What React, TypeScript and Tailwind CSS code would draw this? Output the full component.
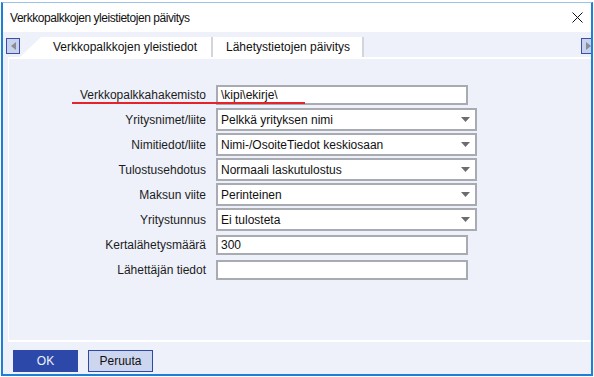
import React from "react";

function Caret() {
  return (
    <svg width="9" height="5" viewBox="0 0 9 5" className="block">
      <polygon points="0,0 9,0 4.5,5" fill="#6b6b70" />
    </svg>
  );
}

function TextField({ value }: { value: string }) {
  return (
    <div className="flex h-[20px] w-[252px] items-center border-2 border-[#a9abb3] bg-white pl-[3px] text-[12px] leading-none text-[#111]">
      {value}
    </div>
  );
}

function SelectField({ value }: { value: string }) {
  return (
    <div className="flex h-[23px] w-[261px] items-center justify-between border-2 border-[#a9abb3] bg-white pl-[3px] pr-[5px] text-[12px] leading-none text-[#111]">
      <span>{value}</span>
      <Caret />
    </div>
  );
}

function Row({ label, children, mark }: { label: string; children: React.ReactNode; mark?: boolean }) {
  return (
    <div className="relative flex h-[25px] items-center">
      <div className="w-[197px] text-right text-[12px] leading-none text-[#1c1c1c]">{label}</div>
      <div className="ml-[10px]">{children}</div>
      {mark && <div className="absolute left-[63px] top-[20px] h-[2px] w-[233px] bg-[#e3242b]" />}
    </div>
  );
}

export default function App() {
  return (
    <div className="h-[377px] w-[594px] overflow-hidden bg-white pt-[2px] font-['Liberation_Sans',Arial,sans-serif]">
      <div className="ml-[1px] flex h-[374px] w-[592px] flex-col border-x-2 border-b-2 border-t border-[#1b80d6] border-t-[#9cc3e8] bg-[#eef1fa]">
        {/* title bar */}
        <div className="flex h-[29px] shrink-0 items-center justify-between bg-white pl-[7px] pr-[8px]">
          <span className="text-[12px] tracking-[-0.45px] text-[#111]">Verkkopalkkojen yleistietojen päivitys</span>
          <svg width="11" height="11" viewBox="0 0 11 11" className="block">
            <path d="M0.5 0.5 L10.5 10.5 M10.5 0.5 L0.5 10.5" stroke="#111" strokeWidth="1" />
          </svg>
        </div>
        {/* tab strip */}
        <div className="flex h-[25px] shrink-0 items-start justify-between overflow-hidden">
          <div className="flex items-start">
            <div className="ml-[3px] mt-[6px] flex h-[16px] w-[14px] items-center justify-center border border-[#3a50a8] bg-[#c9d2ec]">
              <svg width="5" height="8" viewBox="0 0 5 8" className="block">
                <polygon points="5,0 5,8 0,4" fill="#8a8c98" />
              </svg>
            </div>
            <div className="mt-[5px] flex h-[20px] w-[193px] items-center border-r-2 border-[#d3d5dc] bg-white pl-[33px] text-[12px] leading-none text-[#111] [clip-path:polygon(21px_0,100%_0,100%_100%,0_100%)]">
              Verkkopalkkojen yleistiedot
            </div>
            <div className="mt-[5px] flex h-[20px] w-[151px] items-center border-r-2 border-[#d3d5dc] bg-white pl-[13px] text-[12px] leading-none text-[#111]">
              Lähetystietojen päivitys
            </div>
          </div>
          <div className="mr-[-4px] mt-[6px] flex h-[16px] w-[14px] items-center justify-center border border-[#3a50a8] bg-[#c9d2ec]">
            <svg width="5" height="8" viewBox="0 0 5 8" className="block">
              <polygon points="0,0 0,8 5,4" fill="#8a8c98" />
            </svg>
          </div>
        </div>
        {/* content panel */}
        <div className="ml-[5px] h-[285px] shrink-0 border-y-2 border-l border-white bg-[#eef1fa] pt-[23px]">
          <Row label="Verkkopalkkahakemisto" mark>
            <TextField value="\kipi\ekirje\" />
          </Row>
          <Row label="Yritysnimet/liite">
            <SelectField value="Pelkkä yrityksen nimi" />
          </Row>
          <Row label="Nimitiedot/liite">
            <SelectField value="Nimi-/OsoiteTiedot keskiosaan" />
          </Row>
          <Row label="Tulostusehdotus">
            <SelectField value="Normaali laskutulostus" />
          </Row>
          <Row label="Maksun viite">
            <SelectField value="Perinteinen" />
          </Row>
          <Row label="Yritystunnus">
            <SelectField value="Ei tulosteta" />
          </Row>
          <Row label="Kertalähetysmäärä">
            <TextField value="300" />
          </Row>
          <Row label="Lähettäjän tiedot">
            <TextField value="" />
          </Row>
        </div>
        {/* buttons */}
        <div className="flex gap-[10px] pl-[10px] pt-[8px]">
          <div className="flex h-[22px] w-[65px] items-center justify-center bg-[#2c48a9] text-[12px] leading-none text-[#f0f2fa]">
            OK
          </div>
          <div className="flex h-[22px] w-[65px] items-center justify-center border border-[#2f4aa6] bg-[#cdd6ef] text-[12px] leading-none text-[#111]">
            Peruuta
          </div>
        </div>
      </div>
    </div>
  );
}
